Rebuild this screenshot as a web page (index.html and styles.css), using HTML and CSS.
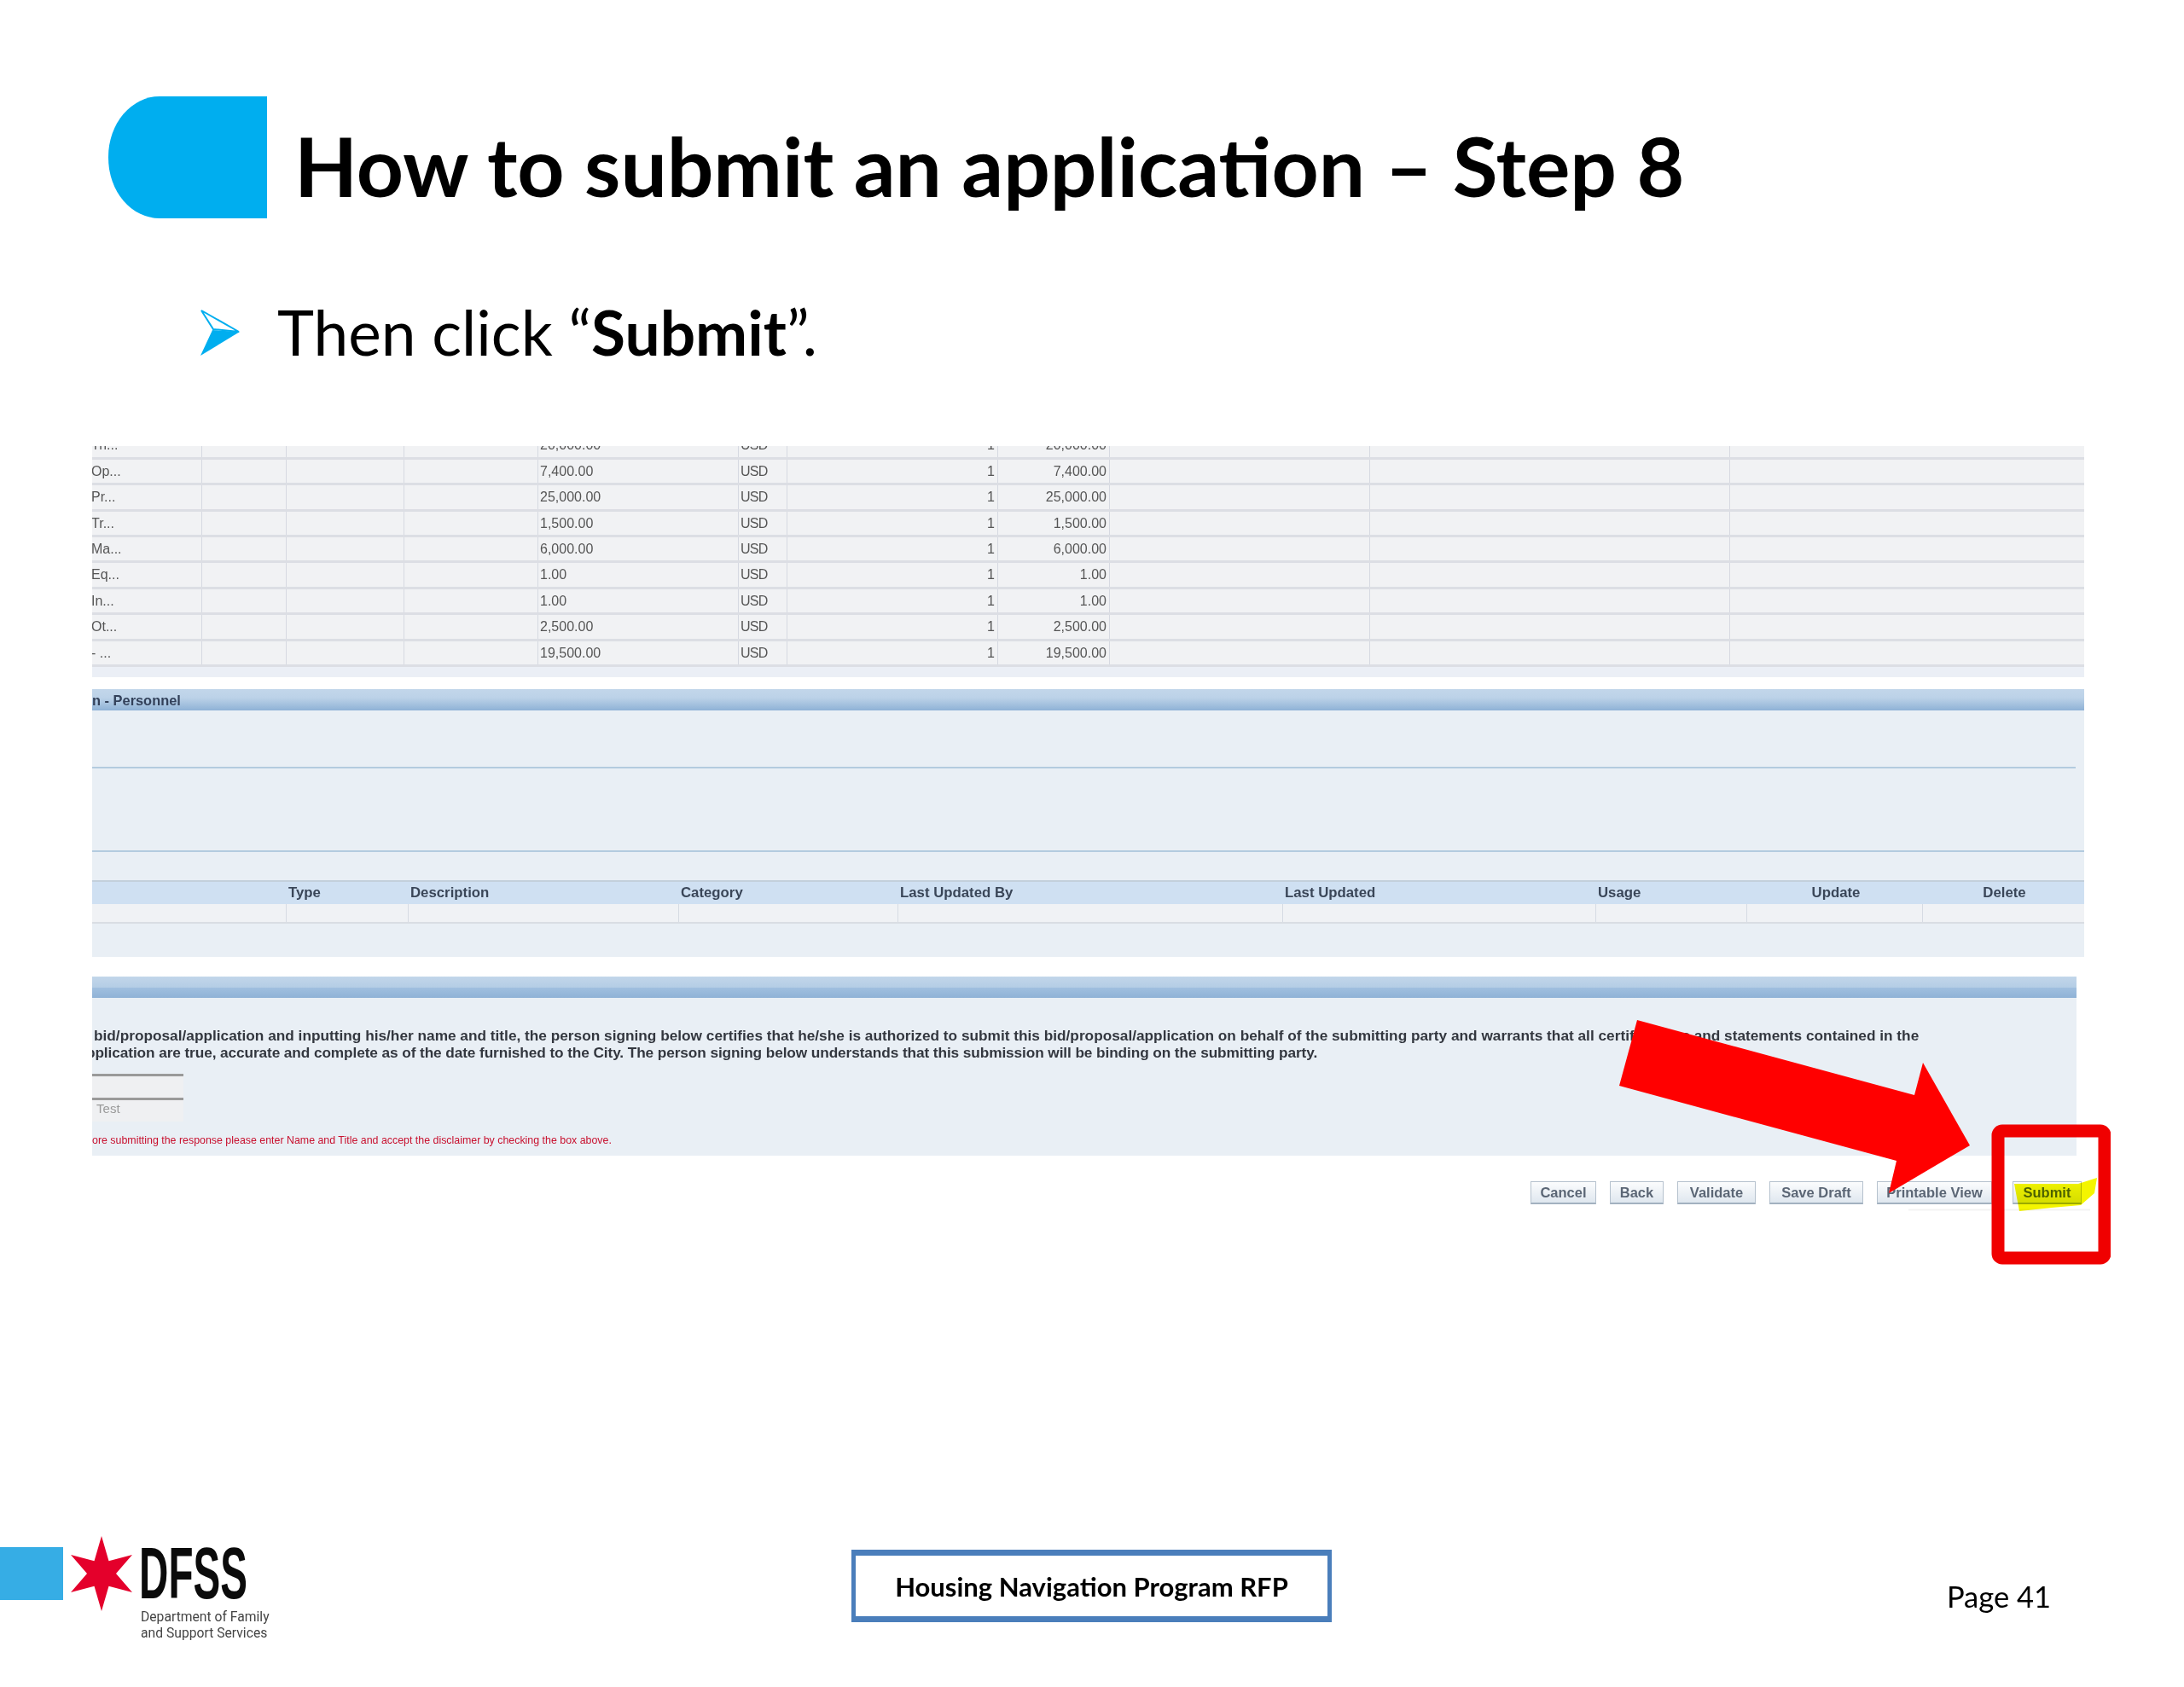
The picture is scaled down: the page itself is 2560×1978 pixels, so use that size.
FILE: index.html
```html
<!DOCTYPE html>
<html lang="en">
<head>
<meta charset="utf-8">
<title>How to submit an application – Step 8</title>
<link rel="stylesheet" href="styles.css">
</head>
<body>
<main class="slide">
  <header class="head">
    <div class="tab"></div>
    <h1 class="title">How to submit an application – Step 8</h1>
  </header>
  <div class="bullet">
    <svg class="bullet-icon" viewBox="0 0 46 55" width="46" height="55"><path class="arrow-top" d="M1 2 45 27 15 24Z"/><path class="arrow-low" d="M46 27 0 55 14 25Z"/></svg>
    <p class="bullet-text">Then click “<b>Submit</b>”.</p>
  </div>

  <section class="shot">
    <div class="rows">
      <div class="row"><span class="lbl">Tri...</span><span></span><span></span><span></span><span class="amt">20,000.00</span><span class="cur">USD</span><span class="num">1</span><span class="num">20,000.00</span><span></span><span></span><span></span></div>
      <div class="row"><span class="lbl">Op...</span><span></span><span></span><span></span><span class="amt">7,400.00</span><span class="cur">USD</span><span class="num">1</span><span class="num">7,400.00</span><span></span><span></span><span></span></div>
      <div class="row"><span class="lbl">Pr...</span><span></span><span></span><span></span><span class="amt">25,000.00</span><span class="cur">USD</span><span class="num">1</span><span class="num">25,000.00</span><span></span><span></span><span></span></div>
      <div class="row"><span class="lbl">Tr...</span><span></span><span></span><span></span><span class="amt">1,500.00</span><span class="cur">USD</span><span class="num">1</span><span class="num">1,500.00</span><span></span><span></span><span></span></div>
      <div class="row"><span class="lbl">Ma...</span><span></span><span></span><span></span><span class="amt">6,000.00</span><span class="cur">USD</span><span class="num">1</span><span class="num">6,000.00</span><span></span><span></span><span></span></div>
      <div class="row"><span class="lbl">Eq...</span><span></span><span></span><span></span><span class="amt">1.00</span><span class="cur">USD</span><span class="num">1</span><span class="num">1.00</span><span></span><span></span><span></span></div>
      <div class="row"><span class="lbl">In...</span><span></span><span></span><span></span><span class="amt">1.00</span><span class="cur">USD</span><span class="num">1</span><span class="num">1.00</span><span></span><span></span><span></span></div>
      <div class="row"><span class="lbl">Ot...</span><span></span><span></span><span></span><span class="amt">2,500.00</span><span class="cur">USD</span><span class="num">1</span><span class="num">2,500.00</span><span></span><span></span><span></span></div>
      <div class="row"><span class="lbl">- ...</span><span></span><span></span><span></span><span class="amt">19,500.00</span><span class="cur">USD</span><span class="num">1</span><span class="num">19,500.00</span><span></span><span></span><span></span></div>
    </div>

    <div class="bar bar-one">n - Personnel</div>
    <div class="panel panel-one">
      <div class="rule rule-short"></div>
      <div class="rule rule-full"></div>
      <div class="att att-head"><span>Type</span><span>Description</span><span>Category</span><span>Last Updated By</span><span>Last Updated</span><span>Usage</span><span class="mid">Update</span><span class="mid">Delete</span></div>
      <div class="att att-row"><span></span><span></span><span></span><span></span><span></span><span></span><span></span><span></span></div>
    </div>

    <div class="bar bar-two"></div>
    <div class="panel panel-two">
      <p class="legal">bid/proposal/application and inputting his/her name and title, the person signing below certifies that he/she is authorized to submit this bid/proposal/application on behalf of the submitting party and warrants that all certifications and statements contained in the</p>
      <p class="legal legal-two">pplication are true, accurate and complete as of the date furnished to the City. The person signing below understands that this submission will be binding on the submitting party.</p>
      <div class="field field-blank"></div>
      <div class="field field-test">: Test</div>
      <p class="warn">ore submitting the response please enter Name and Title and accept the disclaimer by checking the box above.</p>
    </div>

    <div class="buttons">
      <span class="btn btn-cancel">Cancel</span>
      <span class="btn btn-back">Back</span>
      <span class="btn btn-validate">Validate</span>
      <span class="btn btn-save">Save Draft</span>
      <span class="btn btn-print">Printable View</span>
      <span class="btn btn-submit">Submit</span>
    </div>

    <svg class="marks" viewBox="108 523 2366 960" width="2366" height="960">
      <path class="faint" d="M2237 1418.5H2450"/>
      <path class="marker" d="M2361 1388 2436 1388 2458 1381 2455 1399 2439 1413 2405 1416 2367 1420Z"/>
      <path class="red" d="M1919 1196 2244 1284 2254 1246 2309 1343 2214 1399 2223 1361 1898 1273Z"/>
      <rect class="box" x="2342" y="1326" width="125" height="149" rx="5"/>
    </svg>
  </section>

  <footer class="foot">
    <div class="logo">
      <div class="logo-bar"></div>
      <svg class="logo-star" viewBox="0 0 74 88" width="74" height="88"><polygon points="37,0 45.5,29.3 73,22 54,44 73,66 45.5,58.7 37,88 28.5,58.7 1,66 20,44 1,22 28.5,29.3"/></svg>
      <div class="logo-text">
        <div class="logo-mark"><span>DFSS</span></div>
        <div class="logo-sub">Department of Family<br>and Support Services</div>
      </div>
    </div>
    <div class="rfp">Housing Navigation Program RFP</div>
    <div class="page">Page 41</div>
  </footer>
</main>
</body>
</html>
```

FILE: styles.css
```css
* { box-sizing: border-box; }
html, body { margin: 0; padding: 0; background: #fff; }
.slide {
  width: 2560px;
  height: 1978px;
  overflow: hidden;
  background: #fff;
  color: #000;
  font-family: "Lato", "Liberation Sans", sans-serif;
  filter: blur(0.7px);
}

/* heading */
.head { display: flex; align-items: center; gap: 32px; padding: 113px 0 0 127px; }
.tab { width: 186px; height: 143px; background: #00aeef; border-radius: 60px 0 0 60px / 71px 0 0 71px; }
.title { margin: 20px 0 0; height: 123px; font-size: 96.3px; line-height: 123px; font-weight: 700; white-space: nowrap; }

/* bullet */
.bullet { display: flex; align-items: center; gap: 44px; margin: 103px 0 0 235px; height: 60px; }
.bullet-icon { flex: none; }
.arrow-top { fill: #fff; stroke: #00aeef; stroke-width: 2; }
.arrow-low { fill: #00aeef; }
.bullet-text { margin: 0; font-size: 73px; line-height: 60px; white-space: nowrap; }
.bullet-text b { font-weight: 700; }

/* screenshot */
.shot { position: relative; width: 2335px; margin: 104px 0 0 108px; font-family: "Liberation Sans", sans-serif; }
.rows {
  height: 271px;
  overflow: hidden;
  padding-bottom: 12px;
  background: #ebeff6;
}
.row {
  display: grid;
  grid-template-columns: 129px 99px 138px 157px 235px 57px 247px 131px 305px 422px 1fr;
  height: 30.4px;
  background: #f1f2f4;
  border-bottom: 3px solid #dcdee4;
  font-size: 16px;
  line-height: 27px;
  color: #555;
}
.row:first-child { margin-top: -14.6px; }
.row span { border-right: 1px solid #d6d9e1; white-space: nowrap; overflow: hidden; }
.row span:last-child { border-right: 0; }
.lbl { text-indent: -1px; }
.amt { padding-left: 2px; }
.cur { padding-left: 2px; letter-spacing: -0.8px; }
.num { text-align: right; padding-right: 3px; }

.bar {
  height: 25px;
  font-size: 16.4px;
  font-weight: 700;
  line-height: 26px;
  color: #33415a;
  white-space: nowrap;
}
.bar-one { margin-top: 14px; background: linear-gradient(#c2d6ea, #bcd2e8 40%, #8fb2d6); }
.bar-two { width: 2326px; margin-top: 23px; background: linear-gradient(#c2d6ea, #b4cde5 52%, #a0bfdf 53%, #8fb2d6); }

.panel { background: #e9eff5; }
.panel-one { height: 289px; padding-top: 66px; }
.rule { height: 2px; background: #b3cbdf; }
.rule-short { width: 2325px; }
.rule-full { margin-top: 96px; }
.att {
  display: grid;
  grid-template-columns: 228px 143px 317px 257px 451px 367px 177px 206px 1fr;
}
.att-head {
  margin-top: 33px;
  height: 28px;
  background: #cfe0f2;
  border-top: 2px solid #c3cfdb;
  font-size: 16.8px;
  font-weight: 700;
  line-height: 26px;
  color: #3a4658;
}
.att-head span:first-child { grid-column: 2; }
.att-head span { padding-left: 2px; }
.att-head .mid { text-align: center; }
.att-row { height: 23px; background: #f0f2f5; border-bottom: 2px solid #d9dde3; }
.att-row span { border-right: 1px solid #d6dbe3; }

.panel-two { width: 2326px; height: 185px; padding-top: 34px; overflow: hidden; color: #33373f; }
.legal { margin: 0; padding-left: 2px; font-size: 17.25px; font-weight: 700; line-height: 20px; white-space: nowrap; }
.legal-two { margin-left: -9px; letter-spacing: -0.1px; }
.field { width: 107px; background: #eff0f2; }
.field-blank { margin-top: 15px; height: 28px; border-top: 3px solid #9a9a9a; }
.field-test { height: 28px; border-top: 3px solid #9a9a9a; font-size: 15px; line-height: 20px; color: #9a9a9a; text-indent: -3px; }
.warn { margin: 14px 0 0; font-size: 12.4px; line-height: 16px; color: #c8102e; white-space: nowrap; }

.buttons { display: flex; justify-content: flex-end; gap: 16px; padding: 30px 3px 0 0; }
.btn {
  display: block;
  height: 27px;
  background: linear-gradient(#fbfcfd, #dfe7ef);
  border: 1px solid #b6c2ce;
  border-bottom: 2px solid #a3b1c0;
  font-size: 16.5px;
  font-weight: 700;
  line-height: 25px;
  text-align: center;
  color: #5b6675;
}
.btn-cancel { width: 77px; }
.btn-back { width: 63px; }
.btn-validate { width: 92px; }
.btn-save { width: 110px; }
.btn-print { width: 135px; }
.btn-submit { width: 81px; margin-left: 8px; color: #50660f; }

.marks { position: absolute; left: 0; top: 0; pointer-events: none; }
.faint { fill: none; stroke: #f3f3f3; stroke-width: 2; }
.marker { fill: #f4f500; mix-blend-mode: multiply; }
.red { fill: #ff0000; }
.box { fill: none; stroke: #f00000; stroke-width: 15; }

/* footer */
.foot { display: grid; grid-template-columns: 998px 563px 1fr; margin-top: 389px; }
.logo { display: flex; align-items: flex-start; height: 125px; }
.logo-bar { width: 74px; height: 62px; margin: 13px 8px 0 0; background: #36ade5; }
.logo-star { flex: none; fill: #e4002b; }
.logo-text { margin: 13px 0 0 9px; font-family: "Roboto", "Liberation Sans", sans-serif; }
.logo-mark { height: 62px; width: 122px; margin-left: -2px; font-family: "Liberation Sans", sans-serif; font-size: 85px; font-weight: 700; line-height: 62px; color: #0b0b0b; }
.logo-mark span { display: inline-block; transform: scaleX(0.56); transform-origin: left center; }
.logo-sub { margin-top: 10px; font-size: 15.7px; line-height: 19px; color: #444; white-space: nowrap; }
.rfp {
  height: 85px;
  margin-top: 16px;
  background: #fff;
  border: 5px solid #4a7ebb;
  border-width: 7px 5px;
  font-size: 31px;
  font-weight: 700;
  line-height: 72px;
  text-align: center;
  white-space: nowrap;
}
.page { margin-top: 49px; padding-right: 156px; font-size: 34.5px; line-height: 44px; text-align: right; }
```
